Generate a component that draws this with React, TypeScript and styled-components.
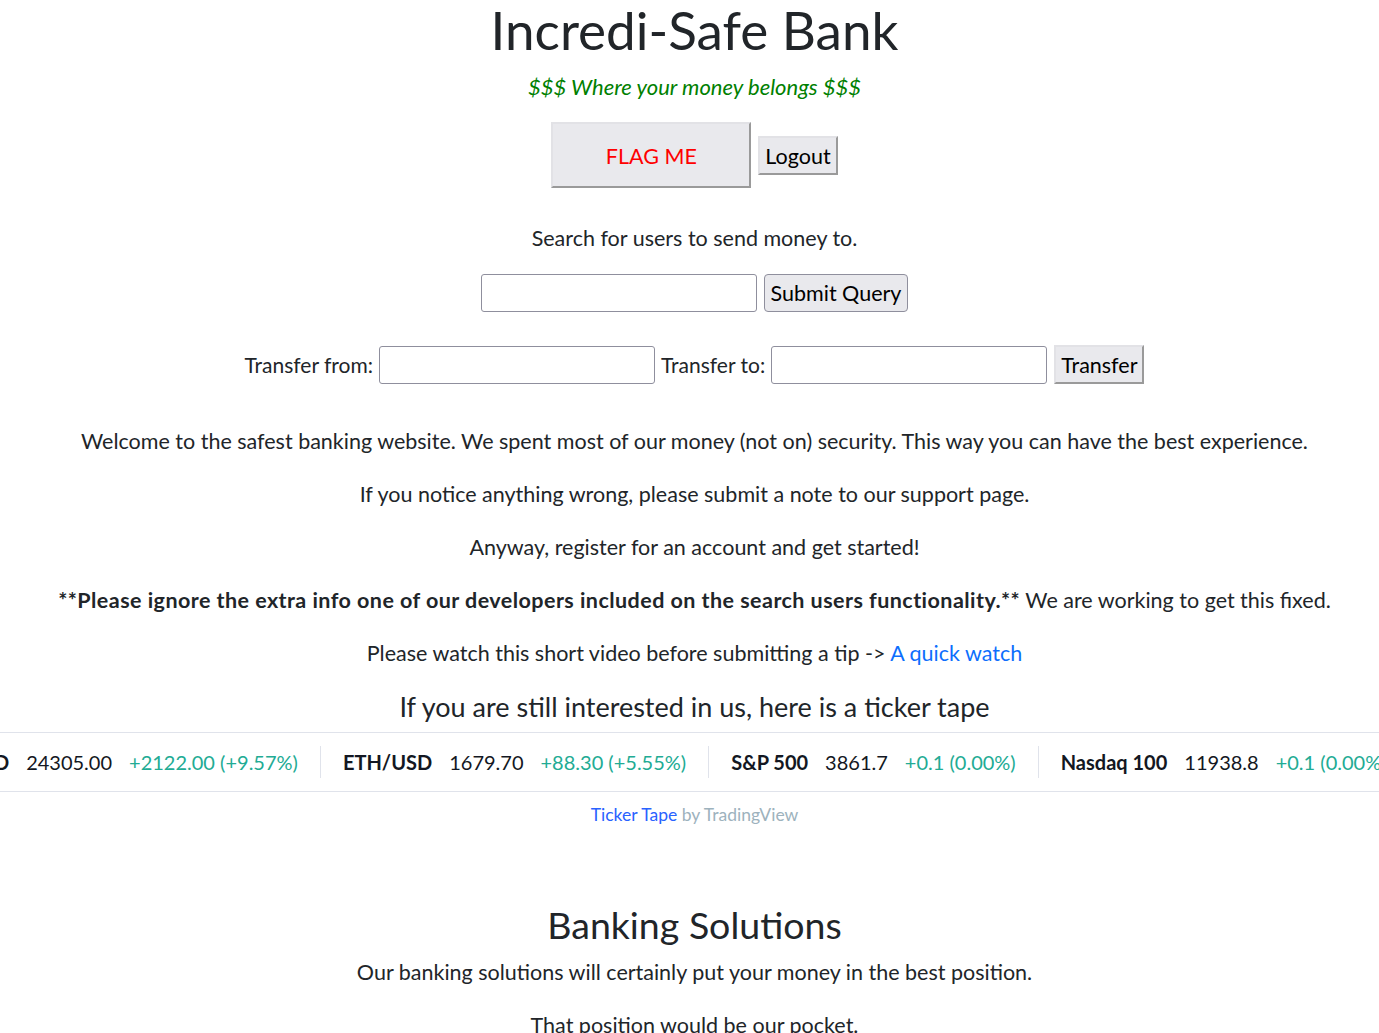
import styled, { createGlobalStyle } from "styled-components";

const GlobalStyle = createGlobalStyle`
	html, body {
		margin: 0;
		padding: 0;
		background: #ffffff;
	}
	body {
		font-family: "Lato", "Open Sans", sans-serif;
		font-size: 21.5px;
		line-height: 30px;
		color: #212529;
		overflow: hidden;
	}
`;

const Page = styled.div`
	text-align: center;
	padding-left: 10px;
`;

const Title = styled.h1`
	margin: 0;
	font-size: 53px;
	font-weight: 400;
	line-height: 60px;
`;

const Tagline = styled.p`
	margin: 12px 0 0;
	color: #008000;
	font-style: italic;
	font-size: 22px;
`;

const Row = styled.div<{ $top: number }>`
	display: flex;
	justify-content: center;
	align-items: center;
	gap: 6px;
	margin-top: ${(p) => p.$top}px;
`;

const OutsetButton = styled.button<{ $big?: boolean }>`
	font-family: inherit;
	font-size: 21.5px;
	background: #e9e9ed;
	color: ${(p) => (p.$big ? "#ff0000" : "#000000")};
	border: 2px solid;
	border-color: #e2e2e6 #9a9a9a #9a9a9a #e2e2e6;
	border-radius: 0;
	width: ${(p) => (p.$big ? "200px" : "auto")};
	height: ${(p) => (p.$big ? "66px" : "39px")};
	padding: 3px 5px 0;
	margin-left: ${(p) => (p.$big ? "0" : "1px")};
	line-height: 1;
`;

const RoundButton = styled.button`
	font-family: inherit;
	font-size: 21.5px;
	background: #e9e9ed;
	color: #000000;
	border: 1px solid #8f8f9d;
	border-radius: 4px;
	height: 38px;
	padding: 2px 6px 0;
	margin-left: 1px;
	line-height: 1;
`;

const TextInput = styled.input`
	width: 276px;
	height: 38px;
	box-sizing: border-box;
	border: 1px solid #8f8f9d;
	border-radius: 3px;
	background: #ffffff;
	font-family: inherit;
	font-size: 20px;
`;

const Label = styled.span`
	font-size: 21px;
`;

const Text = styled.p<{ $top?: number }>`
	margin: ${(p) => p.$top ?? 23}px 0 0;
`;

const Bold = styled.b`
	font-weight: 700;
	letter-spacing: 0.45px;
`;

const Link = styled.a`
	color: #0d6efd;
	text-decoration: none;
`;

const SubHeading = styled.h4`
	margin: 24px 0 0;
	font-size: 27px;
	font-weight: 400;
	line-height: 30px;
`;

const Ticker = styled.div`
	margin: 10px 0 0 -10px;
	height: 58px;
	border-top: 1px solid #e0e3eb;
	border-bottom: 1px solid #e0e3eb;
	overflow: hidden;
	display: flex;
	align-items: center;
	font-family: "Lato", "Open Sans", sans-serif;
	font-size: 20px;
`;

const Track = styled.div`
	display: flex;
	align-items: center;
	white-space: nowrap;
	transform: translateX(-101px);
`;

const TickerItem = styled.div`
	display: flex;
	align-items: center;
	gap: 17px;
	padding: 0 22px;
	height: 32px;
	border-right: 1px solid #e0e3eb;
`;

const Symbol = styled.span`
	font-weight: 700;
	color: #131722;
`;

const Price = styled.span`
	color: #131722;
`;

const Change = styled.span`
	color: #22ab94;
`;

const Credit = styled.div`
	margin-top: 11px;
	font-size: 17.5px;
	line-height: 24px;
	color: #9db2bd;
`;

const CreditLink = styled.span`
	color: #2962ff;
`;

const SectionTitle = styled.h2`
	margin: 74px 0 0;
	font-size: 37.5px;
	font-weight: 400;
	line-height: 48px;
`;

const tickers = [
	{ name: "BTC/USD", price: "24305.00", change: "+2122.00 (+9.57%)" },
	{ name: "ETH/USD", price: "1679.70", change: "+88.30 (+5.55%)" },
	{ name: "S&P 500", price: "3861.7", change: "+0.1 (0.00%)" },
	{ name: "Nasdaq 100", price: "11938.8", change: "+0.1 (0.00%)" },
	{ name: "EUR/USD", price: "1.0870", change: "+0.0012 (+0.11%)" },
];

const App = () => {
	return (
		<Page>
			<GlobalStyle />
			<Title>Incredi-Safe Bank</Title>
			<Tagline>$$$ Where your money belongs $$$</Tagline>
			<Row $top={20}>
				<OutsetButton $big>FLAG ME</OutsetButton>
				<OutsetButton>Logout</OutsetButton>
			</Row>
			<Text $top={35}>Search for users to send money to.</Text>
			<Row $top={21}>
				<TextInput type="text" />
				<RoundButton>Submit Query</RoundButton>
			</Row>
			<Row $top={33}>
				<Label>Transfer from:</Label>
				<TextInput type="text" />
				<Label>Transfer to:</Label>
				<TextInput type="text" />
				<OutsetButton>Transfer</OutsetButton>
			</Row>
			<Text $top={42}>
				Welcome to the safest banking website. We spent most of our money (not on) security. This way you can have the best experience.
			</Text>
			<Text>If you notice anything wrong, please submit a note to our support page.</Text>
			<Text>Anyway, register for an account and get started!</Text>
			<Text>
				<Bold>**Please ignore the extra info one of our developers included on the search users functionality.**</Bold> We are working to get this fixed.
			</Text>
			<Text>
				Please watch this short video before submitting a tip -&gt; <Link href="#">A quick watch</Link>
			</Text>
			<SubHeading>If you are still interested in us, here is a ticker tape</SubHeading>
			<Ticker>
				<Track>
					{tickers.map((t) => (
						<TickerItem key={t.name}>
							<Symbol>{t.name}</Symbol>
							<Price>{t.price}</Price>
							<Change>{t.change}</Change>
						</TickerItem>
					))}
				</Track>
			</Ticker>
			<Credit>
				<CreditLink>Ticker Tape</CreditLink> by TradingView
			</Credit>
			<SectionTitle>Banking Solutions</SectionTitle>
			<Text $top={8}>Our banking solutions will certainly put your money in the best position.</Text>
			<Text>That position would be our pocket.</Text>
		</Page>
	);
};

export default App;
